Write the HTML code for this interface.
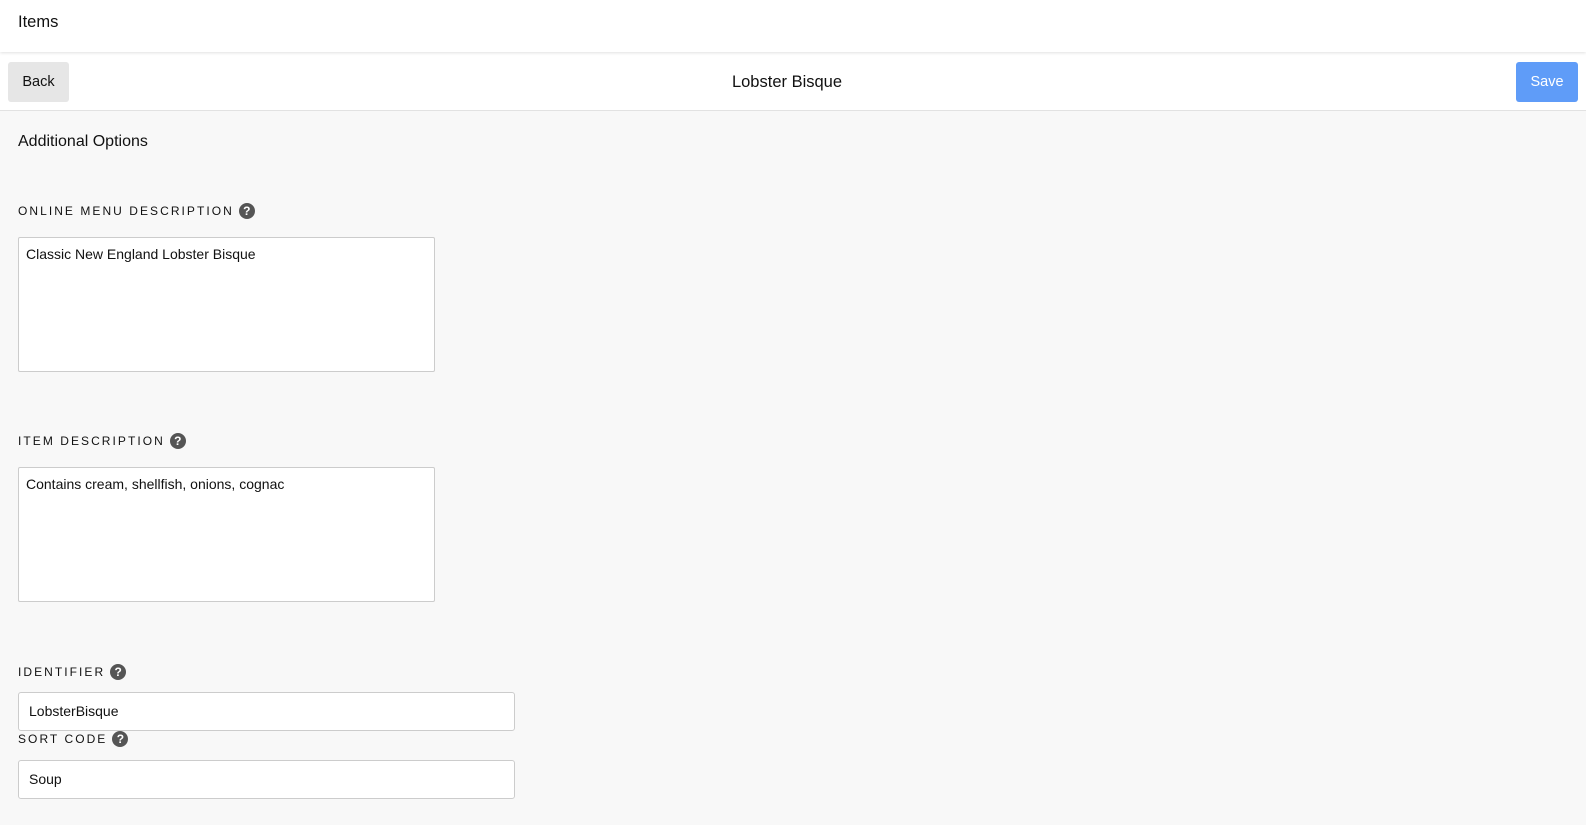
<!DOCTYPE html>
<html><head><meta charset="utf-8"><style>
*{box-sizing:border-box;margin:0;padding:0}
body{width:1586px;height:825px;overflow:hidden;background:#f8f8f8;font-family:"Liberation Sans",Arial,sans-serif;color:#111;position:relative}
.hdr{position:absolute;left:0;top:0;width:1586px;height:52px;background:#fff;box-shadow:0 1px 3px rgba(0,0,0,.12);z-index:2}
.hdr span{position:absolute;left:18px;top:13px;font-size:16.5px}
.bar{position:absolute;left:0;top:52px;width:1586px;height:59px;background:#fff;border-bottom:1px solid #e2e2e2}
.back{position:absolute;left:8px;top:10px;width:61px;height:40px;background:#e6e6e6;border-radius:3px;font-size:14.5px;text-align:center;line-height:40px}
.title{position:absolute;left:0;width:1574px;top:21px;text-align:center;font-size:16.5px}
.save{position:absolute;left:1516px;top:10px;width:62px;height:40px;background:#5f9cf8;border-radius:3px;color:#fff;font-size:14.5px;text-align:center;line-height:40px}
.h2{position:absolute;left:18px;top:133px;font-size:16px}
.lbl{position:absolute;left:18px;font-size:12px;letter-spacing:2.05px;display:flex;align-items:center}
.q{display:inline-block;width:16px;height:16px;border-radius:50%;background:#555;color:#fff;font-size:12px;font-weight:bold;text-align:center;line-height:16px;letter-spacing:0;margin-left:5px}
.ta{position:absolute;left:18px;width:417px;height:135px;background:#fff;border:1px solid #ccc;border-radius:2px;padding:8px 7px;font-size:14px}
.in{position:absolute;left:18px;width:497px;height:39px;background:#fff;border:1px solid #ccc;border-radius:3px;padding:0 10px;line-height:37px;font-size:14px}
</style></head><body>
<div class="hdr"><span>Items</span></div>
<div class="bar"><div class="back">Back</div><div class="title">Lobster Bisque</div><div class="save">Save</div></div>
<div class="h2">Additional Options</div>
<div class="lbl" style="top:203px">ONLINE MENU DESCRIPTION<span class="q">?</span></div>
<div class="ta" style="top:237px">Classic New England Lobster Bisque</div>
<div class="lbl" style="top:433px">ITEM DESCRIPTION<span class="q">?</span></div>
<div class="ta" style="top:467px">Contains cream, shellfish, onions, cognac</div>
<div class="lbl" style="top:664px">IDENTIFIER<span class="q">?</span></div>
<div class="in" style="top:692px">LobsterBisque</div>
<div class="lbl" style="top:731px">SORT CODE<span class="q">?</span></div>
<div class="in" style="top:760px">Soup</div>
</body></html>
